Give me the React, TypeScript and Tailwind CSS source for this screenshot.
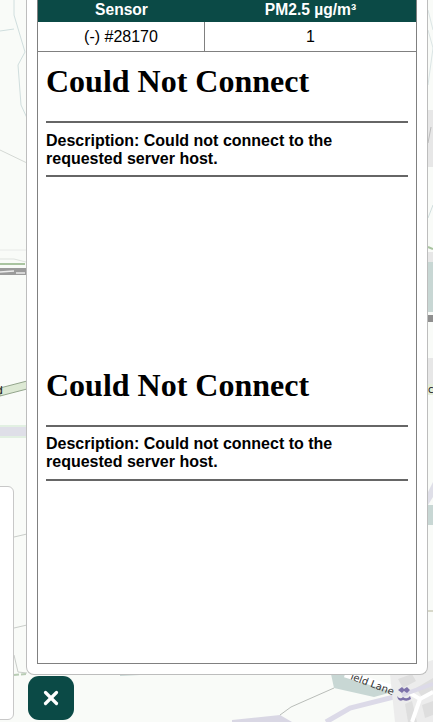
import { X } from "lucide-react";

function MapLayer() {
  return (
    <svg className="absolute inset-0 h-[722px] w-[433px]" viewBox="0 0 433 722" fill="none">
      {/* left edge */}
      <path d="M14 0 L14 15 L25 52 L18 65 L21 105 L27 118" stroke="#d0dede" strokeWidth="1" />
      <path d="M0 31 L14 29" stroke="#d0dede" />
      <path d="M0 150 L27 163" stroke="#d4d8d4" />
      <path d="M0 250 L27 250" stroke="#e8eae8" />
      <path d="M0 259 L14 259 L26 262" stroke="#dfe3df" />
      <path d="M0 264 L25 264" stroke="#a9c4a0" strokeWidth="2" />
      <rect x="0" y="268" width="27" height="7" fill="#9b9b9b" />
      <path d="M0 272 L14 271 M16 273 L25 273" stroke="#ececec" strokeWidth="1.5" />
      <path d="M0 388 L27 381 L27 389 L0 396 Z" fill="#dde9d4" stroke="#93a58c" strokeWidth="1" />
      <text x="-4" y="394" fontSize="11" fill="#222" fontFamily="DejaVu Sans, sans-serif">d</text>
      <rect x="0" y="425" width="27" height="13" fill="#e2f0e2" />
      <rect x="0" y="427" width="27" height="9" fill="#dfdfe8" />
      <path d="M14 537 L27 534 M14 628 L27 625 M14 655 L18 672 L27 673" stroke="#c9cdc9" />
      <path d="M14 675 L27 674" stroke="#b8ccb4" strokeWidth="2" strokeDasharray="5 2" />
      {/* right edge */}
      <path d="M428 10 L433 30 M428 30 L433 48 L428 85" stroke="#dbe5e5" />
      <rect x="428" y="110" width="5" height="57" fill="#e7e7e7" />
      <path d="M428 143 L431 127" stroke="#bdbdbd" />
      <path d="M428 218 L433 205" stroke="#d0dede" />
      <path d="M428 247 L433 249" stroke="#a9c4a0" strokeWidth="2" />
      <rect x="428" y="252" width="5" height="10" fill="#e7e7e7" />
      <rect x="428" y="262" width="5" height="50" fill="#c8d7d4" />
      <rect x="428" y="315" width="5" height="7" fill="#8f8f8f" />
      <rect x="428" y="358" width="5" height="26" fill="#e7e7e7" />
      <rect x="428" y="384" width="5" height="11" fill="#e4eeda" />
      <text x="428" y="393" fontSize="10" fill="#222" fontFamily="DejaVu Sans, sans-serif">c</text>
      <path d="M428 492 L433 482 L433 497 L428 505 Z" fill="#dfdfe8" />
      <rect x="428" y="505" width="5" height="20" fill="#c8d7d4" />
      <path d="M428 611 L433 611" stroke="#b5b59a" />
      {/* bottom */}
      <path d="M120 675 L140 674" stroke="#c8d7d4" strokeWidth="2" />
      <path d="M232 722 L232 720 L280 715 L292 722 Z" fill="#d9d7e4" />
      <path d="M280 715 L291 707 L300 703 L334 688" stroke="#b9bdb9" />
      <path d="M331 674 L334 688 L374 697 L400 690 L350 674 Z" fill="#c8d7d4" />
      <path d="M345 674 L405 692" stroke="#ffffff" strokeWidth="7" />
      <path d="M326 722 L350 708 L402 695 L433 674" stroke="#dcdae8" strokeWidth="5" />
      <path d="M390 674 L433 660 L433 722 L395 722 Z" fill="#ececec" />
      <path d="M398 679 L412 674 L416 681 L403 688 Z" fill="#dedede" />
      <path d="M416 688 L433 678 L433 690 L422 697 Z" fill="#dedede" />
      <path d="M405 704 L412 701 L417 722 L408 722 Z" fill="#dedede" />
      <path d="M422 705 L433 701 L433 715 L425 718 Z" fill="#dedede" />
      <path d="M408 692 L420 699 L433 692 M420 699 L412 722" stroke="#ffffff" strokeWidth="4" />
      <path d="M402 695 L433 684" stroke="#dcdae8" strokeWidth="4" />
      <text
        x="350"
        y="679"
        fontSize="10"
        fill="#333"
        fontFamily="DejaVu Sans, sans-serif"
        transform="rotate(21 350 679)"
      >
        ield Lane
      </text>
      <path d="M398 690 L402 687 L404 689 L407 687 L410 690 L407 693 L404 691 L402 693 Z" fill="#7d72aa" />
      <path d="M397 696 Q400 700 403 697 Q407 700 410 696 L411 699 Q407 702 403 700 Q400 702 398 699 Z" fill="#7d72aa" />
    </svg>
  );
}

function ErrorDoc({ second }: { second?: boolean }) {
  return (
    <div className="h-[304px] px-2 pt-[11px]">
      <h1 className="text-[32px] leading-[37px] font-bold font-['Liberation_Serif',serif] text-black">Could Not Connect</h1>
      <hr className="mt-[21px] border-t-2 border-[#666]" />
      <p className={second ? "mt-[8px] text-base leading-[18px] font-bold text-black" : "mt-[9px] text-base leading-[18px] font-bold text-black"}>
        Description: Could not connect to the requested server host.
      </p>
      <hr className={second ? "mt-[8px] border-t-2 border-[#666]" : "mt-[7px] border-t-2 border-[#666]"} />
    </div>
  );
}

export default function App() {
  return (
    <div className="relative h-[722px] w-[433px] overflow-hidden bg-[#f9fbf8] font-['Liberation_Sans',Arial,sans-serif]">
      <MapLayer />

      {/* left side panel, mostly off screen */}
      <div className="absolute left-[-8px] top-[486px] h-[234px] w-[22px] rounded-md border border-[#c8c8c8] bg-white" />

      {/* popup */}
      <div className="absolute left-[26px] top-0 w-[402px] h-[675px] rounded-b-lg border-x border-b border-[#bdbdbd] bg-white px-[10px] pb-[10px]">
        <div className="flex h-[664px] flex-col border-x border-b border-[#808080]">
          <div className="grid h-[22px] grid-cols-[167px_1fr] bg-[#0b4a46] text-center text-[15.6px] leading-[20px] font-bold text-white">
            <div>Sensor</div>
            <div>PM2.5 µg/m³</div>
          </div>
          <div className="grid h-[30px] grid-cols-[167px_1fr] border-b border-[#808080] text-center text-base leading-[30px] text-black">
            <div className="border-r border-[#808080]">(-) #28170</div>
            <div>1</div>
          </div>
          <ErrorDoc />
          <ErrorDoc second />
        </div>
      </div>

      {/* close button */}
      <button className="absolute left-[28px] top-[676px] flex h-[44px] w-[46px] items-center justify-center rounded-[11px] bg-[#0b4a46] text-white">
        <X size={22} strokeWidth={3.5} />
      </button>
    </div>
  );
}
